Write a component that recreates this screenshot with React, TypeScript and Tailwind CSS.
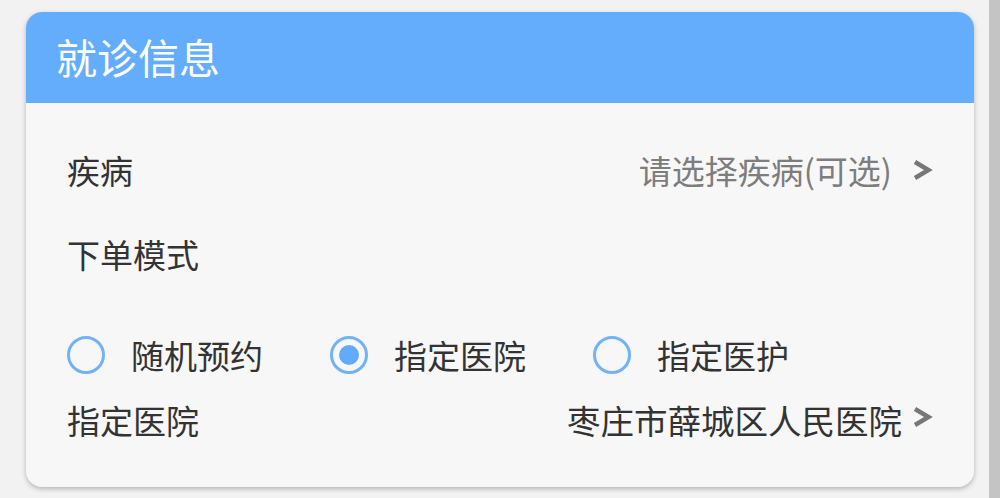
import React from 'react'

const font = { fontFamily: '"Noto Sans CJK SC", "Noto Sans", sans-serif' }

const Chevron = ({ className = '' }: { className?: string }) => (
  <svg viewBox="0 0 22 22" className={`h-[22px] w-[22px] shrink-0 ${className}`} fill="none">
    <path d="M3 3 L16.5 11 L3 19" stroke="#777777" strokeWidth="4.4" strokeLinejoin="miter" />
  </svg>
)

const Radio = ({ label, checked }: { label: string; checked?: boolean }) => (
  <div className="flex w-[263px] items-center">
    <div className="flex h-[38px] w-[38px] items-center justify-center rounded-full border-[3.5px] border-[#72b3f7]">
      {checked && <div className="h-[20px] w-[20px] rounded-full bg-[#64aafa]" />}
    </div>
    <span className="ml-[26px] text-[33px] leading-none text-[#333333]">{label}</span>
  </div>
)

export default function App() {
  return (
    <div className="flex h-[498px] w-[1000px] bg-[#f2f2f2]" style={font}>
      <div className="flex-1 pl-[26px] pr-[15px] pt-[12px]">
        <div className="overflow-hidden rounded-[16px] bg-[#f7f7f7] shadow-[0_2px_5px_rgba(0,0,0,0.25)]">
          <div className="flex h-[91px] items-center bg-[#64adfc] pb-[3px] pl-[30px]">
            <span className="text-[41px] leading-none text-white">就诊信息</span>
          </div>
          <div className="pb-[32px] pl-[41px] pr-[40px] pt-[25px]">
            <div className="flex h-[84px] items-center justify-between">
              <span className="text-[33px] leading-none text-[#333333]">疾病</span>
              <div className="flex items-center gap-[20px]">
                <span className="text-[33px] leading-none text-[#7d7d7d]">请选择疾病(可选)</span>
                <Chevron />
              </div>
            </div>
            <div className="flex h-[84px] items-center">
              <span className="text-[33px] leading-none text-[#333333]">下单模式</span>
            </div>
            <div className="mt-[29px] flex h-[60px] items-center">
              <Radio label="随机预约" />
              <Radio label="指定医院" checked />
              <Radio label="指定医护" />
            </div>
            <div className="flex h-[70px] items-center justify-between">
              <span className="text-[33px] leading-none text-[#333333]">指定医院</span>
              <div className="flex items-center gap-[10px]">
                <span className="text-[33.5px] leading-none text-[#333333]">枣庄市薛城区人民医院</span>
                <Chevron className="-mt-[6px]" />
              </div>
            </div>
          </div>
        </div>
      </div>
      <div className="w-[11px] bg-[#c4c4c4]" />
    </div>
  )
}
